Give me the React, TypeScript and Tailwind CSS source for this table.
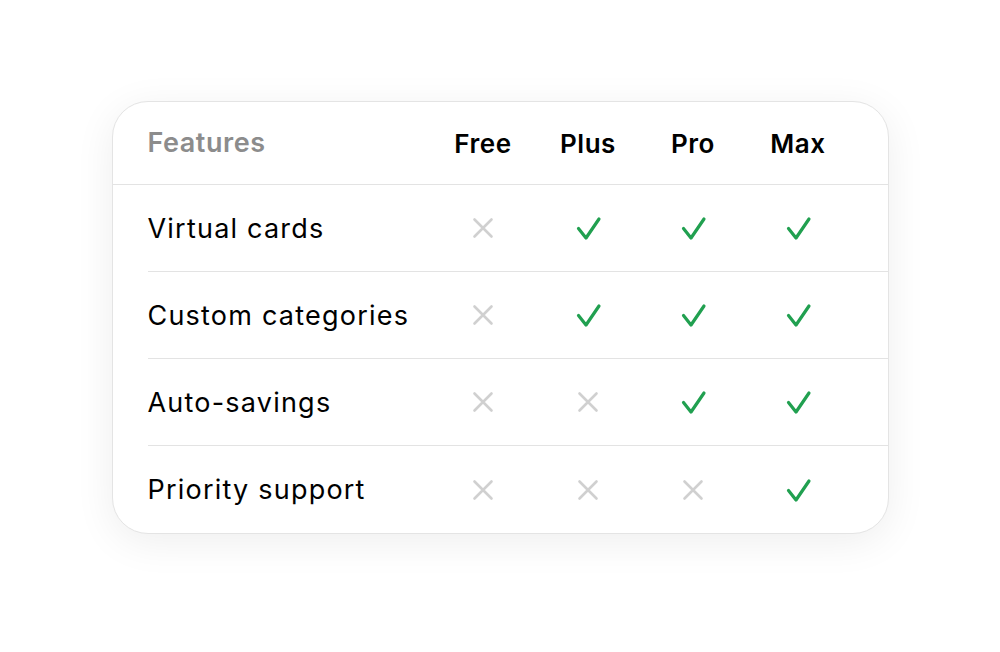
import React from "react";

type Plan = "Free" | "Plus" | "Pro" | "Max";

const plans: Plan[] = ["Free", "Plus", "Pro", "Max"];

const features: { name: string; included: boolean[] }[] = [
  { name: "Virtual cards", included: [false, true, true, true] },
  { name: "Custom categories", included: [false, true, true, true] },
  { name: "Auto-savings", included: [false, false, true, true] },
  { name: "Priority support", included: [false, false, false, true] },
];

const Check = () => (
  <svg width="28" height="28" viewBox="0 0 28 28" fill="none" stroke="#21a050" strokeWidth="3.2" strokeLinecap="round" strokeLinejoin="round">
    <path d="M4.5 14.5L12 24L25 5" />
  </svg>
);

const Cross = () => (
  <svg width="26" height="26" viewBox="0 0 26 26" fill="none" stroke="#d0d0d0" strokeWidth="2.6" strokeLinecap="round">
    <path d="M4.5 4.5l17 17M21.5 4.5l-17 17" />
  </svg>
);

export default function App() {
  return (
    <div
      className="w-[1000px] h-[652px] bg-white flex items-start justify-center pt-[101px]"
      style={{ fontFamily: "Inter, 'Noto Sans', sans-serif" }}
    >
      <div className="w-[777px] bg-white rounded-[36px] border-[1.5px] border-[#e4e4e4] shadow-[0_8px_40px_rgba(0,0,0,0.07)] overflow-hidden">
        <div className="flex items-center h-[83px] pl-[35px] pr-[37px] border-b-[1.5px] border-[#e3e3e3]">
          <div className="flex-1 text-[27px] tracking-[0.02em] font-semibold text-[#8c8c8c]">Features</div>
          {plans.map((p) => (
            <div key={p} className="w-[105px] text-center text-[26px] tracking-[0.02em] font-semibold text-black">
              {p}
            </div>
          ))}
        </div>
        {features.map((f, i) => (
          <div key={f.name} className="pl-[35px]">
            <div
              className={
                "flex items-center h-[87px] pr-[37px] " +
                (i < features.length - 1 ? "border-b-[1.5px] border-[#e3e3e3]" : "")
              }
            >
              <div className="flex-1 pt-[2px] text-[27px] tracking-[0.045em] text-black">{f.name}</div>
              {f.included.map((on, j) => (
                <div key={j} className="w-[105px] flex justify-center">
                  {on ? <Check /> : <Cross />}
                </div>
              ))}
            </div>
          </div>
        ))}
      </div>
    </div>
  );
}
